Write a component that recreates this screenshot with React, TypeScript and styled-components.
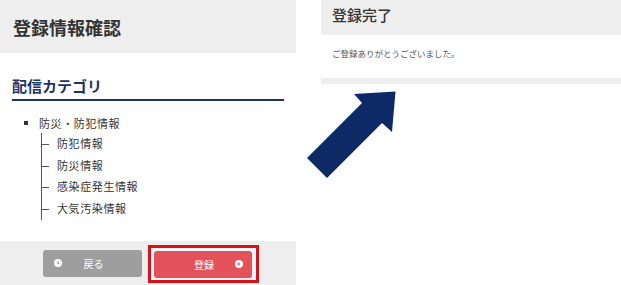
import React from "react";
import styled, { createGlobalStyle } from "styled-components";

const Global = createGlobalStyle`
  html, body { margin: 0; padding: 0; background: #ffffff; }
  body {
    font-family: "Noto Sans CJK JP", "Noto Sans", sans-serif;
    color: #333333;
  }
  * { box-sizing: border-box; }
`;

const Page = styled.div`
  position: relative;
  width: 621px;
  height: 285px;
  display: flex;
  gap: 25px;
  overflow: hidden;
`;

const LeftColumn = styled.section`
  width: 296px;
  height: 285px;
  display: flex;
  flex-direction: column;
`;

const RightColumn = styled.section`
  width: 300px;
  display: flex;
  flex-direction: column;
`;

const Header = styled.div<{ $h: number; $pt: number; $size: number; $weight: number }>`
  height: ${(p) => p.$h}px;
  background: #eeeeee;
  padding: ${(p) => p.$pt}px 0 0 ${(p) => (p.$size > 16 ? 13 : 11)}px;
  font-size: ${(p) => p.$size}px;
  line-height: 20px;
  font-weight: ${(p) => p.$weight};
  color: #333333;
`;

const SectionTitle = styled.h2`
  margin: 23px 12px 0 12px;
  padding-bottom: 3px;
  border-bottom: 2px solid #1c3466;
  font-size: 15px;
  line-height: 20px;
  font-weight: 700;
  color: #1c3466;
`;

const Tree = styled.div`
  margin-top: 12px;
  font-size: 11px;
  color: #333333;
`;

const RootRow = styled.div`
  display: flex;
  align-items: center;
  height: 20px;
  padding-left: 24px;
  gap: 11px;
  letter-spacing: 0.6px;
`;

const Bullet = styled.span`
  width: 4px;
  height: 4px;
  background: #333333;
`;

const SubList = styled.ul`
  list-style: none;
  margin: 0 0 0 41px;
  padding: 0;
  border-left: 1px solid #555555;
`;

const SubItem = styled.li`
  position: relative;
  height: 21.7px;
  line-height: 21.7px;
  padding-left: 15px;
  letter-spacing: 0.6px;
  &::before {
    content: "";
    position: absolute;
    left: 0;
    top: 50%;
    width: 7px;
    height: 1px;
    background: #555555;
  }
`;

const ButtonBar = styled.div`
  margin-top: auto;
  height: 44px;
  background: #eeeeee;
  display: flex;
  align-items: center;
  padding-left: 43px;
  gap: 6px;
`;

const Highlight = styled.div`
  border: 3px solid #d8121d;
  background: #f7f7f7;
  padding: 3px 4px 2px 3px;
  margin-top: 1px;
`;

const Button = styled.button<{ $tone: "gray" | "red" }>`
  width: ${(p) => (p.$tone === "red" ? 98 : 99)}px;
  height: 27px;
  border: none;
  border-radius: 3px;
  background: ${(p) => (p.$tone === "red" ? "#e3515a" : "#9e9e9e")};
  color: #ffffff;
  font-family: inherit;
  font-size: 10px;
  display: grid;
  grid-template-columns: 1fr auto 1fr;
  align-items: center;
  padding: 0 9px 0 11px;
`;

const Cell = styled.span<{ $side: "start" | "end" }>`
  display: flex;
  justify-content: ${(p) => (p.$side === "start" ? "flex-start" : "flex-end")};
`;

const Icon = styled.span`
  width: 8px;
  height: 8px;
  border-radius: 50%;
  background: #ffffff;
  display: flex;
  align-items: center;
  justify-content: center;
`;

const Thanks = styled.p`
  margin: 0;
  padding: 11px 0 0 11px;
  height: 43px;
  font-size: 8.5px;
  line-height: 14px;
  color: #555555;
`;

const Divider = styled.div`
  height: 6px;
  background: #eeeeee;
`;

const ArrowSvg = styled.svg`
  position: absolute;
  left: 300px;
  top: 85px;
  pointer-events: none;
`;

function Tri({ dir, color }: { dir: "left" | "right"; color: string }) {
  return (
    <svg width="4" height="4" viewBox="0 0 4 4">
      {dir === "left" ? (
        <polygon points="3.2,0.3 3.2,3.7 0.6,2" fill={color} />
      ) : (
        <polygon points="0.8,0.3 0.8,3.7 3.4,2" fill={color} />
      )}
    </svg>
  );
}

const items = ["防犯情報", "防災情報", "感染症発生情報", "大気汚染情報"];

export default function App() {
  return (
    <>
      <Global />
      <Page>
        <LeftColumn>
          <Header $h={53} $pt={17} $size={18} $weight={700}>
            登録情報確認
          </Header>
          <SectionTitle>配信カテゴリ</SectionTitle>
          <Tree>
            <RootRow>
              <Bullet />
              <span>防災・防犯情報</span>
            </RootRow>
            <SubList>
              {items.map((t) => (
                <SubItem key={t}>{t}</SubItem>
              ))}
            </SubList>
          </Tree>
          <ButtonBar>
            <Button $tone="gray">
              <Cell $side="start">
                <Icon>
                  <Tri dir="left" color="#9e9e9e" />
                </Icon>
              </Cell>
              <span>戻る</span>
              <Cell $side="end" />
            </Button>
            <Highlight>
              <Button $tone="red">
                <Cell $side="start" />
                <span>登録</span>
                <Cell $side="end">
                  <Icon>
                    <Tri dir="right" color="#e3515a" />
                  </Icon>
                </Cell>
              </Button>
            </Highlight>
          </ButtonBar>
        </LeftColumn>
        <RightColumn>
          <Header $h={35} $pt={5} $size={15} $weight={500}>
            登録完了
          </Header>
          <Thanks>ご登録ありがとうございました。</Thanks>
          <Divider />
        </RightColumn>
        <ArrowSvg width="100" height="100" viewBox="0 0 100 100">
          <polygon
            points="7,73 62,18 54,9 95.5,6.5 92,47 82,38 27,93"
            fill="#0d2a66"
          />
        </ArrowSvg>
      </Page>
    </>
  );
}
